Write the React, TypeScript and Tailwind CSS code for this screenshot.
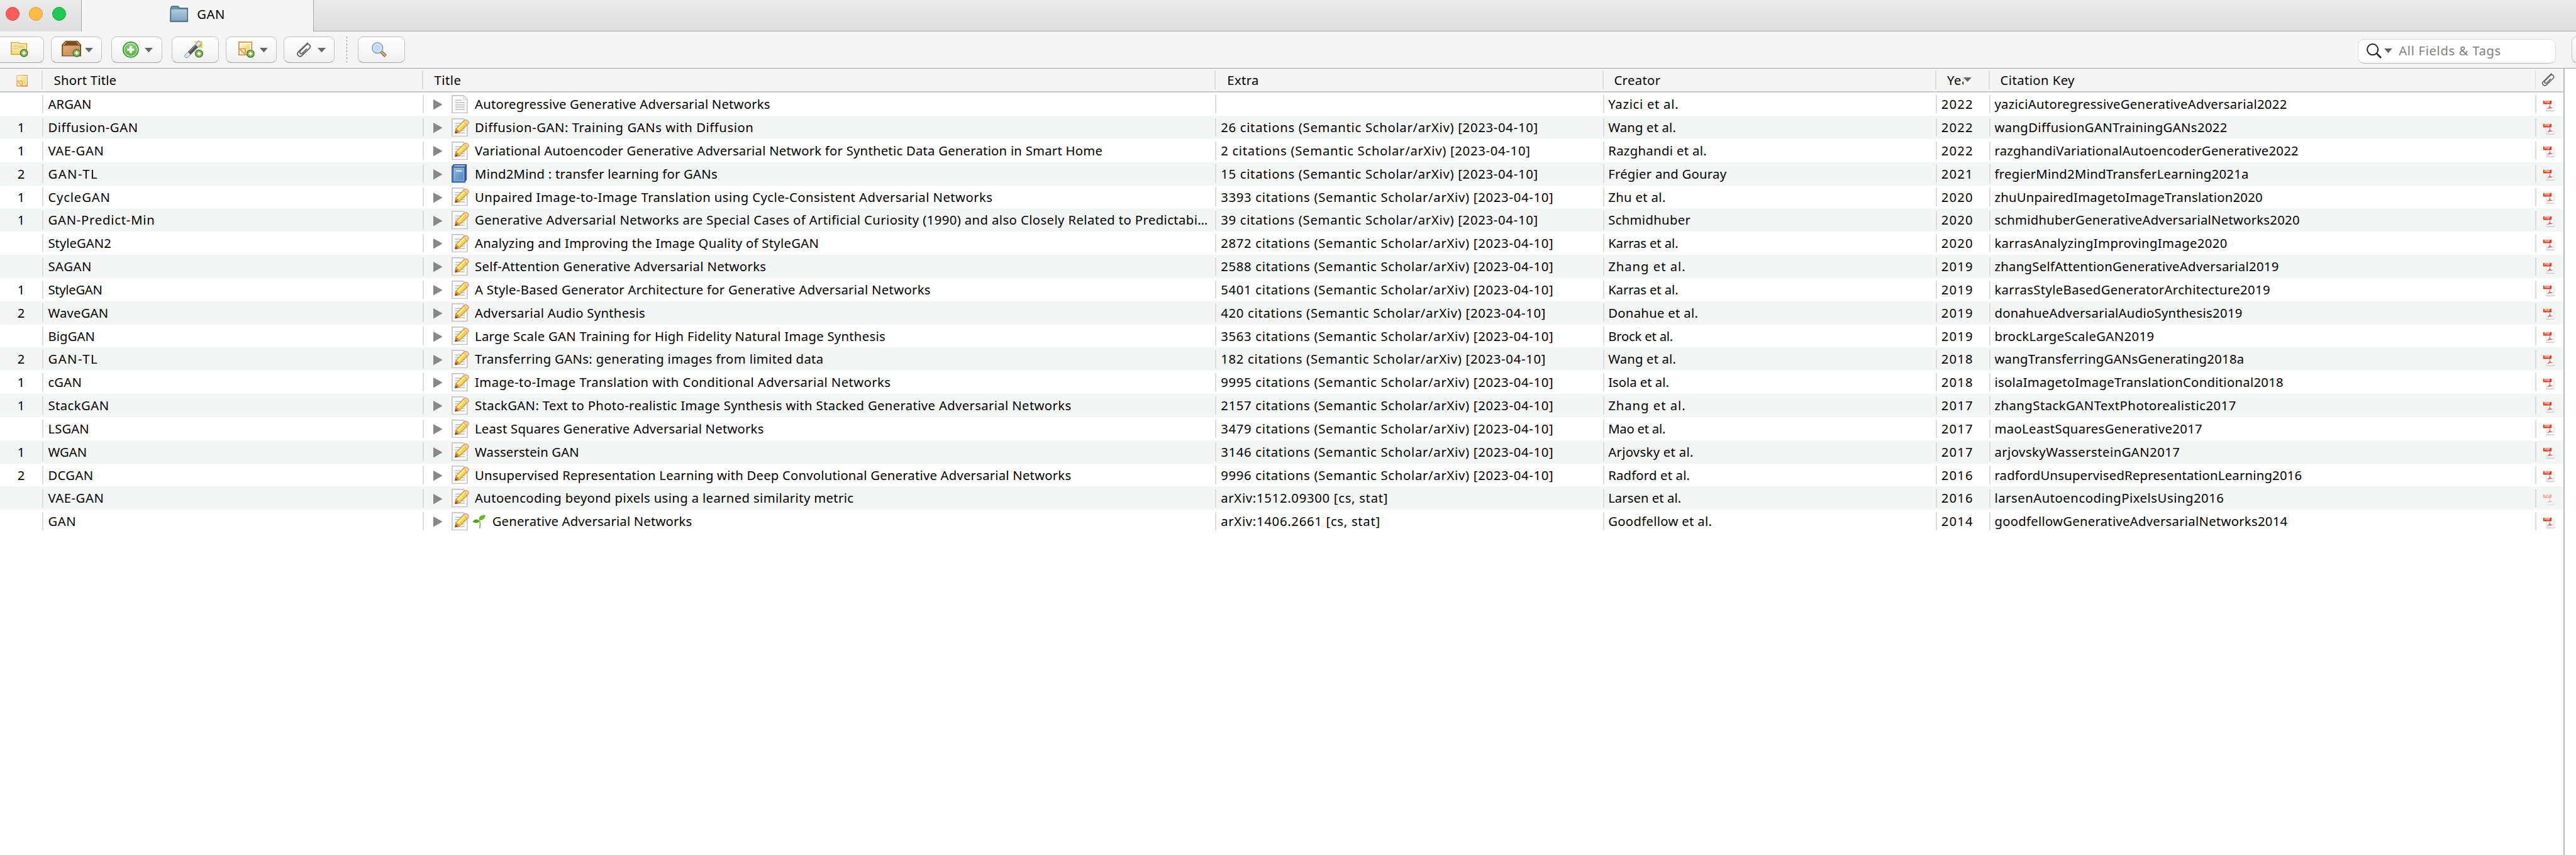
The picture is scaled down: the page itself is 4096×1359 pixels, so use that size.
import type { ReactNode } from 'react';

type Row = {
  count: string;
  short: [string, number];
  title: [string, number];
  extra: string;
  creator: [string, number];
  year: string;
  cite: [string, number?];
  kind?: 'page' | 'book';
  sprout?: boolean;
  faded?: boolean;
};

const citations = (n: number) => `${n} citations (Semantic Scholar/arXiv) [2023-04-10]`;

// Each [text, width] pair carries the width in pixels that the text is tracked out to.
const rows: Row[] = [
  { count: '', short: ['ARGAN', 75], title: ['Autoregressive Generative Adversarial Networks', 510], extra: '', creator: ['Yazici et al.', 121], year: '2022', cite: ['yaziciAutoregressiveGenerativeAdversarial2022', 505], kind: 'page' },
  { count: '1', short: ['Diffusion-GAN', 155], title: ['Diffusion-GAN: Training GANs with Diffusion', 481], extra: citations(26), creator: ['Wang et al.', 117], year: '2022', cite: ['wangDiffusionGANTrainingGANs2022', 402] },
  { count: '1', short: ['VAE-GAN', 96], title: ['Variational Autoencoder Generative Adversarial Network for Synthetic Data Generation in Smart Home', 1084], extra: citations(2), creator: ['Razghandi et al.', 170], year: '2022', cite: ['razghandiVariationalAutoencoderGenerative2022', 525] },
  { count: '2', short: ['GAN-TL', 85], title: ['Mind2Mind : transfer learning for GANs', 419], extra: citations(15), creator: ['Frégier and Gouray', 204], year: '2021', cite: ['fregierMind2MindTransferLearning2021a', 439], kind: 'book' },
  { count: '1', short: ['CycleGAN', 107], title: ['Unpaired Image-to-Image Translation using Cycle-Consistent Adversarial Networks', 894], extra: citations(3393), creator: ['Zhu et al.', 99], year: '2020', cite: ['zhuUnpairedImagetoImageTranslation2020', 463] },
  { count: '1', short: ['GAN-Predict-Min', 184], title: ['Generative Adversarial Networks are Special Cases of Artificial Curiosity (1990) and also Closely Related to Predictabi…', 1266], extra: citations(39), creator: ['Schmidhuber', 142], year: '2020', cite: ['schmidhuberGenerativeAdversarialNetworks2020', 527] },
  { count: '', short: ['StyleGAN2', 109], title: ['Analyzing and Improving the Image Quality of StyleGAN', 594], extra: citations(2872), creator: ['Karras et al.', 121], year: '2020', cite: ['karrasAnalyzingImprovingImage2020'] },
  { count: '', short: ['SAGAN', 75], title: ['Self-Attention Generative Adversarial Networks', 503], extra: citations(2588), creator: ['Zhang et al.', 133], year: '2019', cite: ['zhangSelfAttentionGenerativeAdversarial2019', 491] },
  { count: '1', short: ['StyleGAN', 94], title: ['A Style-Based Generator Architecture for Generative Adversarial Networks', 787], extra: citations(5401), creator: ['Karras et al.', 121], year: '2019', cite: ['karrasStyleBasedGeneratorArchitecture2019'] },
  { count: '2', short: ['WaveGAN', 104], title: ['Adversarial Audio Synthesis', 294], extra: citations(420), creator: ['Donahue et al.', 155], year: '2019', cite: ['donahueAdversarialAudioSynthesis2019', 428] },
  { count: '', short: ['BigGAN', 81], title: ['Large Scale GAN Training for High Fidelity Natural Image Synthesis', 709], extra: citations(3563), creator: ['Brock et al.', 112], year: '2019', cite: ['brockLargeScaleGAN2019'] },
  { count: '2', short: ['GAN-TL', 85], title: ['Transferring GANs: generating images from limited data', 602], extra: citations(182), creator: ['Wang et al.', 117], year: '2018', cite: ['wangTransferringGANsGenerating2018a', 431] },
  { count: '1', short: ['cGAN', 58], title: ['Image-to-Image Translation with Conditional Adversarial Networks', 718], extra: citations(9995), creator: ['Isola et al.', 105], year: '2018', cite: ['isolaImagetoImageTranslationConditional2018', 499] },
  { count: '1', short: ['StackGAN', 105], title: ['StackGAN: Text to Photo-realistic Image Synthesis with Stacked Generative Adversarial Networks', 1030], extra: citations(2157), creator: ['Zhang et al.', 133], year: '2017', cite: ['zhangStackGANTextPhotorealistic2017', 417] },
  { count: '', short: ['LSGAN', 71], title: ['Least Squares Generative Adversarial Networks', 499], extra: citations(3479), creator: ['Mao et al.', 99], year: '2017', cite: ['maoLeastSquaresGenerative2017'] },
  { count: '1', short: ['WGAN', 67], title: ['Wasserstein GAN', 180], extra: citations(3146), creator: ['Arjovsky et al.', 147], year: '2017', cite: ['arjovskyWassersteinGAN2017', 320] },
  { count: '2', short: ['DCGAN', 78], title: ['Unsupervised Representation Learning with Deep Convolutional Generative Adversarial Networks', 1030], extra: citations(9996), creator: ['Radford et al.', 141], year: '2016', cite: ['radfordUnsupervisedRepresentationLearning2016', 531] },
  { count: '', short: ['VAE-GAN', 96], title: ['Autoencoding beyond pixels using a learned similarity metric', 654], extra: 'arXiv:1512.09300 [cs, stat]', creator: ['Larsen et al.', 126], year: '2016', cite: ['larsenAutoencodingPixelsUsing2016', 396], faded: true },
  { count: '', short: ['GAN', 48], title: ['Generative Adversarial Networks', 345], extra: 'arXiv:1406.2661 [cs, stat]', creator: ['Goodfellow et al.', 179], year: '2014', cite: ['goodfellowGenerativeAdversarialNetworks2014', 506], sprout: true },
];

const ctx = document.createElement('canvas').getContext('2d');

function tracking(text: string, width?: number) {
  if (!ctx || !width) return 0.42;
  ctx.font = '22px "Noto Sans"';
  return (width - ctx.measureText(text).width) / (text.length - 1);
}

function Fit({ value }: { value: [string, number?] }) {
  const [text, width] = value;
  return (
    <span className="whitespace-nowrap" style={{ letterSpacing: `${tracking(text, width).toFixed(3)}px` }}>
      {text}
    </span>
  );
}

/* ---------- icons ---------- */

function PlusBadge({ x, y }: { x: number; y: number }) {
  return (
    <g transform={`translate(${x} ${y})`}>
      <circle r="6.2" fill="#8fb567" stroke="#467a2c" strokeWidth="1.6" />
      <path d="M-3 0H3M0 -3V3" stroke="#fff" strokeWidth="2" />
    </g>
  );
}

function NewCollectionIcon() {
  return (
    <svg width="32" height="32" viewBox="0 0 32 32" fill="none">
      <defs>
        <linearGradient id="yf" x1="0" y1="0" x2="0" y2="1">
          <stop offset="0" stopColor="#fffdf0" />
          <stop offset="1" stopColor="#f2d965" />
        </linearGradient>
      </defs>
      <path d="M2 4h13l1.500 2H28.500v18.500H2z" fill="url(#yf)" stroke="#d9a52e" strokeWidth="1.700" />
      <path d="M5 8h8l1 2h11.500M5 14.500h8l2-2h10.500" stroke="#e8cf7a" strokeWidth="2" />
      <path d="M5 8h8v4H5z" fill="#ecd98e" />
      <PlusBadge x={24} y={22} />
    </svg>
  );
}

function LibraryIcon() {
  return (
    <svg width="34" height="32" viewBox="0 0 34 32" fill="none">
      <defs>
        <linearGradient id="bx" x1="0" y1="0" x2="1" y2="1">
          <stop offset="0" stopColor="#e4b183" />
          <stop offset="1" stopColor="#c67f49" />
        </linearGradient>
      </defs>
      <path d="M1 8L7 1.500H27L33 8V27H1z" fill="#8c5c28" stroke="#7c4f20" strokeWidth="1.500" />
      <path d="M5 7.500L9 3.500H25L29 7.500z" fill="#74491d" />
      <path d="M3 8L8 3M31 8L26 3" stroke="#c49a6c" strokeWidth="1.500" />
      <rect x="3" y="10" width="28" height="15.500" fill="url(#bx)" stroke="#d7a679" strokeWidth="1" />
      <PlusBadge x={26} y={22} />
    </svg>
  );
}

function NewItemIcon() {
  return (
    <svg width="28" height="28" viewBox="0 0 28 28">
      <defs>
        <linearGradient id="gr" x1="0" y1="0" x2="0" y2="1">
          <stop offset="0" stopColor="#8fd07a" />
          <stop offset="1" stopColor="#5cb04a" />
        </linearGradient>
      </defs>
      <circle cx="14" cy="14" r="13" fill="#dff2d8" stroke="#35952c" strokeWidth="2" />
      <circle cx="14" cy="14" r="11" fill="url(#gr)" />
      <path d="M8 14h12M14 8v12" stroke="#fff" strokeWidth="4" />
    </svg>
  );
}

function WandIcon() {
  return (
    <svg width="33" height="32" viewBox="0 0 33 32" fill="none">
      <path d="M26 0l1 4 5-3-1.500 5 2 1.500-2.500 2 2 4.500-5-1.500-2.500 2-1-4-5-1 2-3-4-5 5 1.500 2-3z" fill="#ffc629" />
      <path d="M25 2l1 4 4-1-2.500 3 2 3-4-1-2 2-2-7z" fill="#f08a12" />
      <path d="M4 27L26 5" stroke="#92a9bd" strokeWidth="7.500" strokeLinecap="round" />
      <path d="M4 27L26 5" stroke="#d9e6f0" strokeWidth="5" strokeLinecap="round" />
      <path d="M8.500 22.500L21.500 9.500" stroke="#555" strokeWidth="6.500" />
      <path d="M8 20.500L20 8.500" stroke="#8c8c8c" strokeWidth="1.500" />
      <PlusBadge x={25.5} y={23} />
    </svg>
  );
}

function NoteIcon({ small }: { small?: boolean }) {
  const size = small ? 20 : 28;
  return (
    <svg width={size} height={size} viewBox={small ? '0 0 24 24' : '0 0 28 28'} fill="none">
      <defs>
        <linearGradient id="nt" x1="0" y1="0" x2="1" y2="1">
          <stop offset="0" stopColor="#fbf3cc" />
          <stop offset="1" stopColor="#ecd455" />
        </linearGradient>
        <linearGradient id="nb" x1="0" y1="0" x2="1" y2="1">
          <stop offset="0" stopColor="#f3cf9c" />
          <stop offset="1" stopColor="#e07f1f" />
        </linearGradient>
      </defs>
      <rect x="1" y="1" width="22" height="22" fill={small ? '#fff0d2' : '#fff'} stroke={small ? 'url(#nb)' : '#dd9347'} strokeWidth={small ? 2.4 : 2} />
      <rect x="4" y="4" width="16" height="16" fill="url(#nt)" />
      <path d="M2 13h9.500v9.500z" fill="#fbe6c4" />
      <path d="M2 12.500h10V22M2.500 13L11.500 22.500" stroke={small ? '#eba455' : '#dd9347'} strokeWidth="1.800" />
      {!small && <PlusBadge x={21} y={21} />}
    </svg>
  );
}

function Paperclip({ size }: { size: number }) {
  return (
    <svg width={size} height={size} viewBox="0 0 26 27" fill="none" stroke="#666" strokeWidth="2.100" strokeLinecap="round">
      <path d="M20 1.500L3.200 17.500C-1 22 5.200 28.500 9.800 24L23.300 10.800C27 6.500 21.500 1.500 17.500 5L7 15.500C4 19 7.800 22.300 10.500 19.800L18 12.300" />
    </svg>
  );
}

function LookupIcon() {
  return (
    <svg width="27" height="27" viewBox="0 0 27 27" fill="none">
      <path d="M16.500 16.500L24 24" stroke="#9c6427" strokeWidth="5.500" />
      <path d="M16 16L23.500 23.500" stroke="#dcb27c" strokeWidth="2.500" />
      <circle cx="10" cy="10" r="9" fill="#e9f1fb" stroke="#86a3d0" strokeWidth="2" />
      <circle cx="10" cy="10" r="6.500" fill="#c3d9f3" />
    </svg>
  );
}

function FolderIcon() {
  return (
    <svg width="32" height="29" viewBox="0 0 32 29">
      <defs>
        <linearGradient id="fd" x1="0" y1="0" x2="0" y2="1">
          <stop offset="0" stopColor="#b4cadb" />
          <stop offset="1" stopColor="#7fa6c4" />
        </linearGradient>
      </defs>
      <path d="M1 27.500H31V29H1z" fill="#cfcfcf" />
      <path d="M1.500 5L3.500 1h10.500l3 3.500H31V27H1z" fill="#6c94b3" stroke="#456882" strokeWidth="1.700" strokeLinejoin="round" />
      <rect x="2.500" y="6.500" width="27" height="19.500" fill="url(#fd)" />
    </svg>
  );
}

function PageIcon({ pencil }: { pencil?: boolean }) {
  return (
    <svg width="30" height="32" viewBox="0 0 30 32" fill="none">
      <path d="M1 1H20.500L27 7.500V31H1z" fill="#fdfdfd" stroke="#c3c3c3" strokeWidth="1.800" />
      <path d="M20.500 1V8H27z" fill="#f2f2f2" stroke="#d0d0d0" strokeWidth="1" />
      <path d="M6 9h12M6 13h17M6 17h17M6 21h17M6 25h17" stroke="#bcbcbc" strokeWidth="1.600" />
      {pencil && (
        <g>
          <path d="M6 26L7.500 18.500L22 3.500Q25 1.500 28 4.500T28 10L13 24.500z" fill="#f7d64c" stroke="#d1902f" strokeWidth="1.300" strokeLinejoin="round" />
          <path d="M9.500 19.500L23.500 5.500" stroke="#fff3a6" strokeWidth="2.200" />
          <path d="M21 5L22.500 3.300Q25 1.500 28 4.500T28 10L26.500 11z" fill="#f5cfae" stroke="#d99b60" strokeWidth="1" />
          <path d="M6 26L7.500 18.500Q12 19 13 24.500z" fill="#c78d4b" />
          <path d="M6 26L7 21.500L10.500 25z" fill="#6b451b" />
        </g>
      )}
    </svg>
  );
}

function BookIcon() {
  return (
    <svg width="27" height="32" viewBox="0 0 27 32" fill="none">
      <defs>
        <linearGradient id="bk" x1="0" y1="0" x2="1" y2="1">
          <stop offset="0" stopColor="#93b8de" />
          <stop offset="1" stopColor="#4f86c3" />
        </linearGradient>
      </defs>
      <path d="M1 4L4 .8H25.500V27L22.500 30z" fill="#24487f" stroke="#365f9c" strokeWidth="1.500" />
      <path d="M3.500 3.800L5 2.200H24L22.500 3.800z" fill="#fff" />
      <rect x="1" y="4.800" width="22" height="26.200" fill="#5d8fc9" stroke="#3862a2" strokeWidth="1.900" />
      <rect x="5" y="7" width="16" height="21" fill="url(#bk)" stroke="#a9c6e4" strokeWidth=".8" />
      <path d="M8 11.500h10" stroke="#fff" strokeWidth="1.800" />
    </svg>
  );
}

function SproutIcon() {
  return (
    <svg width="23" height="24" viewBox="0 0 23 24" fill="none">
      <path d="M12.500 23.500C14 18 14.500 13 11.500 9.500" stroke="#7cb53a" strokeWidth="2" />
      <path d="M11.500 9.500C11 3 15 .5 22.500 .5C22.500 6.500 18 10.500 11.500 9.500z" fill="#69b52c" />
      <path d="M12 12C10 6.500 4 7 .5 12.500C5 15 10 15 12 12z" fill="#4ea022" />
    </svg>
  );
}

function PdfIcon({ faded }: { faded?: boolean }) {
  return (
    <svg width="20" height="20" viewBox="0 0 20 20" fill="none" className={faded ? 'opacity-40' : 'opacity-100'}>
      <path d="M5 .8H15.500L18.500 4V18.500H5z" fill="#fbfbfb" stroke="#dedede" strokeWidth="1" />
      <path d="M5 18.700H18.800" stroke="#c4c4c4" strokeWidth="1.200" />
      <path d="M11 8C12 11 11 13 7.500 15.500M11.300 11.500C12 13.500 14 14 16 13.800M8.500 14.300L14 13" stroke="#e0564a" strokeWidth="1.200" />
      <rect x="0" y="1" width="14" height="6" fill="#da2f14" />
      <text x="7" y="5.900" textAnchor="middle" fontSize="5" fontWeight="700" fill="#fff" fontFamily="Liberation Sans, sans-serif">PDF</text>
    </svg>
  );
}

function DownArrow() {
  return (
    <svg width="14" height="8" viewBox="0 0 14 8" className="shrink-0">
      <path d="M0 0H14L7 8z" fill="#666" />
    </svg>
  );
}

/* ---------- toolbar ---------- */

function ToolButton({ children, className }: { children?: ReactNode; className: string }) {
  return (
    <div className={`flex h-[46px] shrink-0 items-center rounded-[9px] border border-[#c2c2c2] border-b-2 border-b-[#a3a3a3] bg-linear-to-b from-white to-[#f0f0f0] ${className}`}>
      {children}
    </div>
  );
}

function TitleBar() {
  return (
    <div className="flex h-[54px] bg-linear-to-b from-[#ebebeb] to-[#dedede]">
      <div className="flex w-[140px] gap-4 pt-3 pl-[10px]">
        <div className="size-6 rounded-full border border-[#e2463f] bg-[#ff5b5a]" />
        <div className="size-6 rounded-full border border-[#df9f32] bg-[#ffbb45]" />
        <div className="size-6 rounded-full border border-[#12a93b] bg-[#1fc954]" />
      </div>
      <div className="flex w-[402px] border-x-2 border-[#a8a8a8] bg-[#f5f5f5] pl-[152px]">
        <div className="pt-[10px]">
          <FolderIcon />
        </div>
        <div className="pt-[10px] pl-[15px] leading-[30px]">
          <Fit value={['GAN', 48]} />
        </div>
      </div>
      <div className="flex-1 border-b-2 border-[#a8a8a8]" />
    </div>
  );
}

function Toolbar() {
  return (
    <div className="flex h-[64px] items-start border-b-2 border-[#a6a6a6] bg-[#f5f5f5] pt-[9px]">
      <ToolButton className="-ml-2 w-[84px] pl-6">
        <NewCollectionIcon />
      </ToolButton>
      <ToolButton className="ml-3 w-[88px] gap-[7px] pl-[17px]">
        <LibraryIcon />
        <DownArrow />
      </ToolButton>
      <ToolButton className="ml-4 w-[88px] gap-[10px] pl-[19px]">
        <NewItemIcon />
        <DownArrow />
      </ToolButton>
      <ToolButton className="ml-4 w-[82px] pl-[21px]">
        <WandIcon />
      </ToolButton>
      <ToolButton className="ml-3 w-[88px] gap-[8px] pl-[21px]">
        <NoteIcon />
        <DownArrow />
      </ToolButton>
      <ToolButton className="ml-3 w-[88px] gap-[11px] pl-[20px]">
        <Paperclip size={26} />
        <DownArrow />
      </ToolButton>
      <div className="ml-[20px] h-[46px] w-[2px] bg-[repeating-linear-gradient(to_bottom,#8f8f8f_0_3px,transparent_3px_6px)]" />
      <ToolButton className="ml-[18px] w-[82px] pl-[23px]">
        <LookupIcon />
      </ToolButton>
      <div className="mt-1 ml-auto flex h-[43px] w-[342px] shrink-0 items-center rounded-[11px] border border-[#dcdcdc] border-b-2 border-b-[#b8b8b8] bg-white pl-[14px]">
        <svg width="26" height="26" viewBox="0 0 26 26" fill="none" stroke="#222" className="-mt-[2px]">
          <circle cx="10.500" cy="10.500" r="9.300" strokeWidth="2.200" />
          <path d="M17.500 17.500L25 25" strokeWidth="3" />
        </svg>
        <div className="-mt-[2px] ml-[5px] flex items-center">
          <DownArrow />
        </div>
        <div className="-mt-px ml-[11px] leading-[30px] text-[#808080]">
          <Fit value={['All Fields & Tags', 176]} />
        </div>
      </div>
      <ToolButton className="-mr-4 ml-[27px] w-6" />
    </div>
  );
}

/* ---------- table ---------- */

function Cell({ className, children, bar = true }: { className: string; children?: ReactNode; bar?: boolean }) {
  return (
    <div className={`flex h-full shrink-0 items-center ${className}`}>
      {bar && <div className="h-8 w-[2px] shrink-0 bg-[#dcdcdc]" />}
      {children}
    </div>
  );
}

function HeaderRow() {
  return (
    <div className="flex h-[42px] border-b-3 border-[#c9c9c9] bg-[#f5f5f5]">
      <Cell className="w-[72px] pt-[3px] pl-[28px]" bar={false}>
        <NoteIcon small />
      </Cell>
      <Cell className="w-[657px]">
        <span className="pl-[19px]"><Fit value={['Short Title', 108]} /></span>
      </Cell>
      <Cell className="w-[1368px]">
        <span className="pl-[19px] tracking-[0.5px]">Title</span>
      </Cell>
      <Cell className="w-[670px]">
        <span className="pl-5 tracking-[0.4px]">Extra</span>
      </Cell>
      <Cell className="w-[575px]">
        <span className="pl-[18px] tracking-[0.4px]">Creator</span>
      </Cell>
      <Cell className="w-[92px]">
        <span className="ml-[18px] w-[28px] overflow-hidden tracking-[0.8px]">Year</span>
        <DownArrow />
      </Cell>
      <Cell className="w-[943px]">
        <span className="pl-[18px]"><Fit value={['Citation Key', 128]} /></span>
      </Cell>
      <Cell className="flex-1">
        <span className="pl-[9px]"><Paperclip size={23} /></span>
      </Cell>
    </div>
  );
}

function ItemRow({ row }: { row: Row }) {
  return (
    <div className="flex h-10 odd:bg-[#f4f5f5] even:bg-white">
      <Cell className="w-[73px] justify-center" bar={false}>{row.count}</Cell>
      <Cell className="w-[657px]">
        <span className="pl-2"><Fit value={row.short} /></span>
      </Cell>
      <Cell className="w-[1368px]">
        <svg width="16" height="20" viewBox="0 0 16 20" className="mt-[2px] ml-4 shrink-0">
          <path d="M0 1L16 10L0 19z" fill="#888" />
        </svg>
        <div className="ml-4 w-[40px] shrink-0">
          {row.kind === 'book' ? <BookIcon /> : <PageIcon pencil={!row.kind} />}
        </div>
        {row.sprout && (
          <div className="-ml-1 w-[34px] shrink-0">
            <SproutIcon />
          </div>
        )}
        <Fit value={row.title} />
      </Cell>
      <Cell className="w-[670px]">
        <span className="pl-[8px] tracking-[0.78px]">{row.extra}</span>
      </Cell>
      <Cell className="w-[575px]">
        <span className="pl-[7px]"><Fit value={row.creator} /></span>
      </Cell>
      <Cell className="w-[92px]">
        <span className="pl-[7px] tracking-[1.3px]">{row.year}</span>
      </Cell>
      <Cell className="w-[943px]">
        <span className="pl-[7px]"><Fit value={row.cite} /></span>
      </Cell>
      <Cell className="flex-1">
        <span className="mt-[5px] pl-[12px]"><PdfIcon faded={row.faded} /></span>
      </Cell>
    </div>
  );
}

export default function App() {
  return (
    <div className="h-[1359px] w-[4096px] overflow-hidden bg-white">
      <div className="flex h-[1476px] w-[4448px] flex-col overflow-hidden bg-white font-['Noto_Sans',sans-serif] text-[22px] leading-[40px] text-black [zoom:0.920863]">
        <TitleBar />
        <Toolbar />
        <div className="flex flex-1">
          <div className="w-[4428px] border-r-3 border-[#bcbcbc]">
            <HeaderRow />
            {rows.map((row) => (
              <ItemRow key={row.cite[0]} row={row} />
            ))}
          </div>
        </div>
      </div>
    </div>
  );
}
